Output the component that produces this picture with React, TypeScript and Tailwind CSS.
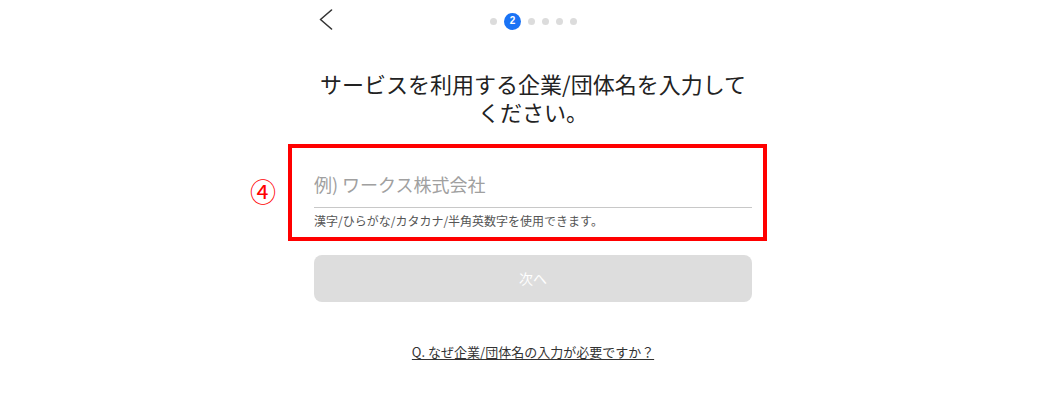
const jp = "font-['Noto_Sans_CJK_JP','Noto_Sans',sans-serif]";

function Steps() {
  return (
    <div className="flex items-center gap-[7px]">
      <span className="w-[7px] h-[7px] rounded-full bg-[#dcdcdc]" />
      <span className="w-[17px] h-[17px] rounded-full bg-[#1a73f5] text-white text-[10px] font-bold flex items-center justify-center leading-none font-['Liberation_Sans',sans-serif]">
        2
      </span>
      {[3, 4, 5, 6].map((n) => (
        <span key={n} className="w-[7px] h-[7px] rounded-full bg-[#dcdcdc]" />
      ))}
    </div>
  );
}

export default function App() {
  return (
    <div className={`w-[1061px] h-[401px] bg-white ${jp} text-[#222]`}>
      <div className="w-[438px] ml-[314px] flex flex-col">
        <div className="relative h-[40px] flex items-center justify-center">
          <button className="absolute left-[5px] top-[9px] text-[#333]">
            <svg width="14" height="21" viewBox="0 0 14 21" fill="none">
              <polyline
                points="12.5,1 1.5,10.5 12.5,20"
                stroke="currentColor"
                strokeWidth="1.6"
                strokeLinecap="round"
                strokeLinejoin="round"
              />
            </svg>
          </button>
          <div className="ml-[1px] mt-[2px]">
            <Steps />
          </div>
        </div>

        <h1 className="mt-[29px] text-[22px] leading-[28px] text-center font-normal text-[#222]">
          サービスを利用する企業/団体名を入力して
          <br />
          ください。
        </h1>

        <div className="relative mt-[41px]">
          <div className="absolute left-[-26px] right-[-15px] top-[-22px] bottom-[-12px] border-4 border-[#ff0000] pointer-events-none" />
          <span className="absolute left-[-64px] top-[12px] text-[26px] leading-none text-[#ff0000]">
            ④
          </span>
          <input
            placeholder="例) ワークス株式会社"
            className="w-full h-[42px] pb-[6px] text-[18px] outline-none placeholder:text-[#a0a0a0] border-b border-[#c8c8c8] bg-transparent"
          />
          <p className="mt-[5px] text-[12px] leading-[16px] text-[#555]">
            漢字/ひらがな/カタカナ/半角英数字を使用できます。
          </p>
        </div>

        <button className="mt-[26px] h-[47px] w-full rounded-[8px] bg-[#dddddd] text-white text-[14px]">
          次へ
        </button>

        <a className="mt-[41px] self-center text-[13px] leading-[18px] text-[#333] underline underline-offset-2 cursor-pointer">
          Q. なぜ企業/団体名の入力が必要ですか？
        </a>
      </div>
    </div>
  );
}
